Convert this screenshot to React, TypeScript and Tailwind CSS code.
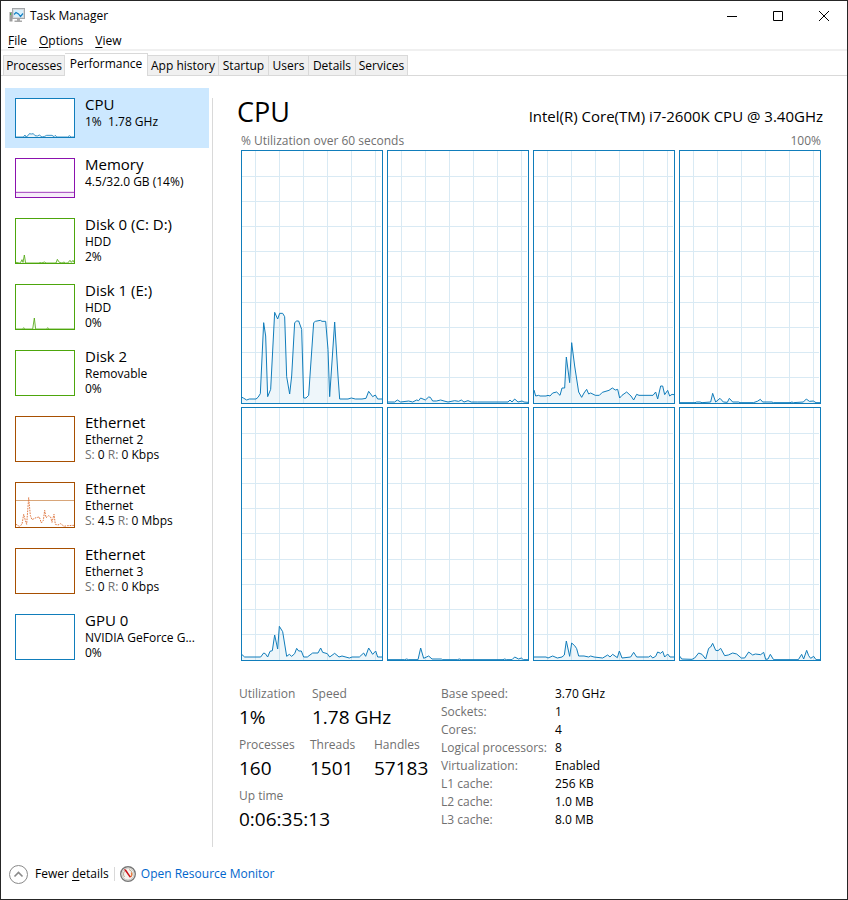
import { useState } from "react";
import clsx from "clsx";

type Point = [number, number];

// every trace is a list of [x, height above the baseline], in thirds of a pixel
const cores: Point[][] = [
    [[0, 16], [4, 14], [14, 8], [22, 11], [42, 11], [48, 16], [55, 27], [65, 240], [71, 200], [77, 18], [86, 40], [98, 271], [107, 251], [113, 268], [122, 268], [128, 258], [134, 78], [143, 26], [149, 80], [158, 240], [164, 245], [170, 245], [179, 220], [185, 14], [192, 14], [200, 22], [206, 110], [215, 240], [220, 244], [235, 247], [240, 244], [251, 244], [258, 160], [263, 18], [278, 242], [288, 80], [293, 11], [318, 11], [328, 14], [340, 11], [360, 11], [372, 13], [380, 34], [392, 18], [400, 23], [407, 11], [420, 11]],
    [[0, 2], [20, 2], [28, 8], [38, 2], [62, 5], [74, 2], [86, 8], [92, 6], [98, 14], [112, 8], [122, 17], [127, 16], [134, 5], [145, 5], [158, 8], [168, 5], [180, 2], [200, 6], [212, 4], [220, 8], [228, 2], [240, 6], [250, 2], [268, 2], [360, 2], [366, 8], [372, 2], [380, 11], [390, 2], [402, 5], [408, 2], [420, 1]],
    [[0, 38], [5, 20], [14, 22], [18, 20], [36, 20], [42, 22], [48, 20], [56, 29], [68, 32], [78, 22], [84, 44], [92, 44], [97, 137], [107, 60], [113, 180], [122, 110], [134, 32], [143, 16], [150, 29], [158, 40], [164, 26], [170, 29], [184, 22], [196, 22], [205, 31], [225, 37], [235, 44], [244, 38], [251, 40], [257, 14], [264, 22], [278, 32], [291, 20], [299, 8], [308, 25], [315, 22], [357, 22], [365, 32], [371, 11], [380, 50], [386, 50], [392, 24], [401, 37], [407, 20], [414, 25], [420, 24]],
    [[0, 0], [45, 0], [50, 2], [60, 2], [66, 0], [92, 2], [98, 28], [107, 2], [120, 13], [130, 2], [142, 1], [148, 13], [158, 2], [176, 2], [180, 0], [220, 0], [232, 4], [241, 10], [248, 2], [276, 2], [280, 0], [330, 0], [336, 2], [340, 0], [370, 2], [379, 11], [388, 4], [400, 5], [408, 0], [420, 0]],
    [[0, 15], [8, 8], [56, 8], [65, 20], [70, 18], [77, 8], [84, 25], [91, 27], [98, 74], [107, 32], [112, 100], [122, 84], [134, 10], [142, 16], [149, 10], [158, 18], [164, 34], [170, 26], [178, 26], [185, 8], [196, 8], [212, 20], [228, 20], [236, 35], [242, 22], [256, 18], [263, 8], [278, 19], [291, 8], [300, 11], [322, 5], [330, 8], [352, 8], [365, 20], [371, 10], [380, 35], [392, 16], [401, 26], [407, 8], [420, 8]],
    [[0, 0], [50, 0], [56, 2], [62, 0], [90, 0], [98, 35], [107, 4], [122, 11], [132, 2], [150, 2], [160, 2], [164, 0], [208, 0], [214, 2], [220, 0], [345, 0], [350, 2], [356, 0], [372, 0], [380, 8], [392, 2], [400, 5], [406, 0], [420, 0]],
    [[0, 8], [36, 8], [42, 5], [56, 11], [70, 5], [84, 8], [91, 14], [97, 56], [107, 10], [113, 50], [122, 42], [128, 33], [134, 11], [150, 11], [164, 8], [170, 11], [180, 8], [206, 5], [221, 14], [228, 8], [236, 16], [250, 6], [256, 26], [264, 5], [290, 8], [299, 22], [308, 8], [344, 8], [350, 12], [356, 5], [365, 10], [371, 23], [380, 19], [386, 25], [392, 8], [401, 17], [408, 8], [420, 8]],
    [[0, 10], [5, 2], [36, 1], [44, 5], [56, 20], [66, 16], [77, 2], [86, 34], [92, 38], [98, 49], [107, 28], [114, 27], [122, 34], [134, 12], [145, 14], [158, 20], [170, 17], [184, 5], [194, 5], [206, 23], [218, 14], [226, 17], [242, 15], [251, 22], [257, 1], [264, 2], [271, 16], [280, 1], [282, 0], [355, 0], [365, 16], [371, 2], [380, 28], [386, 12], [392, 4], [401, 10], [408, 0], [420, 0]],
];

const cpuMini: Point[] = [[0, 0], [22, 0], [27, 6], [30, 0], [36, 4], [40, 10], [46, 9], [52, 10], [57, 4], [64, 3], [70, 6], [78, 0], [86, 2], [92, 5], [108, 5], [114, 1], [118, 5], [122, 0], [155, 0], [160, 4], [166, 0], [174, 0]];
const memoryMini: Point[] = [[-4, 14], [178, 14]];
const disk0Mini: Point[] = [[0, 2], [10, 0], [14, 2], [18, 10], [21, 2], [25, 24], [29, 0], [70, 0], [73, 3], [76, 0], [86, 3], [90, 0], [120, 0], [124, 11], [130, 2], [138, 0], [144, 3], [148, 0], [155, 0], [162, 8], [166, 2], [171, 8], [174, 2]];
const disk1Mini: Point[] = [[0, 0], [20, 0], [23, 4], [26, 0], [50, 0], [55, 33], [59, 0], [92, 0], [95, 4], [98, 0], [174, 0]];
const netMini: Point[] = [[0, 8], [10, 2], [18, 8], [23, 38], [28, 20], [32, 8], [38, 88], [43, 35], [48, 22], [60, 28], [70, 30], [76, 12], [82, 20], [86, 50], [90, 28], [98, 34], [104, 30], [108, 14], [114, 38], [118, 8], [126, 6], [134, 10], [144, 2], [154, 4], [174, 5]];

const devices = [
    { name: "CPU", lines: ["1%  1.78 GHz"], box: "h-10 border-[#117dbb] text-[#117dbb]", trace: cpuMini },
    { name: "Memory", lines: ["4.5/32.0 GB (14%)"], box: "h-10 border-[#8b12ae] text-[#8b12ae]", trace: memoryMini },
    { name: "Disk 0 (C: D:)", lines: ["HDD", "2%"], box: "h-[46px] border-[#4da60c] text-[#4da60c]", trace: disk0Mini },
    { name: "Disk 1 (E:)", lines: ["HDD", "0%"], box: "h-[46px] border-[#4da60c] text-[#4da60c]", trace: disk1Mini },
    { name: "Disk 2", lines: ["Removable", "0%"], box: "h-[46px] border-[#4da60c] text-[#4da60c]" },
    { name: "Ethernet", lines: ["Ethernet 2"], net: ["0", "0 Kbps"], box: "h-[46px] border-[#a74f01] text-[#a74f01]" },
    { name: "Ethernet", lines: ["Ethernet"], net: ["4.5", "0 Mbps"], box: "h-[46px] border-[#a74f01] text-[#a74f01]", trace: netMini, dotted: true },
    { name: "Ethernet", lines: ["Ethernet 3"], net: ["0", "0 Kbps"], box: "h-[46px] border-[#a74f01] text-[#a74f01]" },
    { name: "GPU 0", lines: ["NVIDIA GeForce G...", "0%"], box: "h-[46px] border-[#117dbb] text-[#117dbb]" },
];

const tabs = [
    { name: "Processes", width: "w-[62px]" },
    { name: "Performance", width: "w-[83px]" },
    { name: "App history", width: "w-[71px]" },
    { name: "Startup", width: "w-[50px]" },
    { name: "Users", width: "w-10" },
    { name: "Details", width: "w-[47px]" },
    { name: "Services", width: "w-[52px]" },
];

const specs = [
    ["Base speed:", "3.70 GHz"],
    ["Sockets:", "1"],
    ["Cores:", "4"],
    ["Logical processors:", "8"],
    ["Virtualization:", "Enabled"],
    ["L1 cache:", "256 KB"],
    ["L2 cache:", "1.0 MB"],
    ["L3 cache:", "8.0 MB"],
];

const toPoints = (trace: Point[], base: number) => trace.map(([x, h]) => `${x},${base - h}`).join(" ");

const CoreChart = ({ trace }: { trace: Point[] }) => {
    const line = toPoints(trace, 755);
    return (
        <div className="h-[254px] border border-[#117dbb] bg-white">
            <svg className="block h-full w-full" viewBox="0 0 420 756" preserveAspectRatio="none" fill="none">
                <g stroke="#d9eaf4" strokeWidth="3">
                    {[0, 1, 2, 3, 4, 5].map((i) => (
                        <path key={i} d={`M${40.5 + i * 72} 0V756`} />
                    ))}
                    {[25, 50, 75, 100, 125, 151, 176, 201, 226].map((y) => (
                        <path key={y} d={`M0 ${y * 3 + 1.5}H417`} />
                    ))}
                </g>
                <polygon points={`0,756 ${line} 420,756`} fill="#117dbb" fillOpacity="0.07" />
                <polyline points={line} stroke="#117dbb" strokeWidth="3" />
            </svg>
        </div>
    );
};

const MiniChart = ({ trace, dotted, tall }: { trace: Point[]; dotted?: boolean; tall: boolean }) => {
    const base = tall ? 132 : 114;
    const line = toPoints(trace, base);
    return (
        <svg className="block h-full w-full" viewBox={`0 0 174 ${base}`} preserveAspectRatio="none" fill="none">
            {dotted ? (
                <>
                    <path d="M0 52.500H174" stroke="#d8a67a" strokeWidth="3" />
                    <polyline points={line} stroke="#e07a45" strokeWidth="3" strokeDasharray="5 3" />
                </>
            ) : (
                <>
                    <polygon points={`0,${base} ${line} 174,${base}`} fill="currentColor" fillOpacity="0.08" />
                    <polyline points={line} stroke="currentColor" strokeWidth="3" strokeOpacity="0.8" />
                </>
            )}
        </svg>
    );
};

const AppIcon = () => (
    <svg className="h-4 w-4" viewBox="0 0 16 16">
        <rect x="0.500" y="4" width="3" height="9.500" fill="#9c9c9c" />
        <rect x="1" y="5" width="1" height="2" fill="#3fae49" />
        <rect x="3.500" y="0.500" width="12" height="10" fill="#d5d9dc" stroke="#a3a7aa" />
        <rect x="5" y="2" width="9" height="7" fill="#d8f0fc" />
        <path d="M5 6.500l2-2 2.500 1.500 2 2.500 2.500-3" fill="none" stroke="#1481c4" strokeWidth="1.200" />
        <path d="M8 11h3v1.500h2V14H5.500v-1.500H8z" fill="#a9a9a9" />
    </svg>
);

const GaugeIcon = () => (
    <svg className="h-4 w-4" viewBox="0 0 16 16">
        <circle cx="8" cy="8" r="7.300" fill="#f5f3ef" stroke="#777" strokeWidth="1.400" />
        <circle cx="8" cy="8" r="6" fill="none" stroke="#c9c7c3" />
        <path d="M4.500 11A4.600 4.600 0 0 1 6 4M9 3.500a4.600 4.600 0 0 1 2 7.500" fill="none" stroke="#b9a88e" />
        <path d="M11.300 6.500a4 4 0 0 1-.8 4.500" fill="none" stroke="#ee7a3c" strokeWidth="1.200" />
        <path d="M3.800 3.200L6 3.500l5 7.500-1.300.6z" fill="#c90f16" />
    </svg>
);

const Stat = ({ label, value, width }: { label: string; value: string; width: string }) => (
    <div className={width}>
        <dt className="whitespace-nowrap text-xs leading-[18px] text-[#707070]">{label}</dt>
        <dd className="whitespace-nowrap text-[19px] leading-7">{value}</dd>
    </div>
);

const App = () => {
    const [tab, setTab] = useState("Performance");
    const [device, setDevice] = useState(0);

    return (
        <div className="flex min-h-screen flex-col border border-[#262626] bg-white font-['Open_Sans','Noto_Sans',sans-serif] text-xs text-black">
            <header className="flex h-[30px] items-center pl-2">
                <AppIcon />
                <h1 className="ml-[5px] flex-1">Task Manager</h1>
                <button aria-label="Minimize" className="flex h-7 w-[46px] items-center justify-center">
                    <svg className="h-[10px] w-[10px]" viewBox="0 0 10 10" stroke="#000"><path d="M0 5.500h10" /></svg>
                </button>
                <button aria-label="Maximize" className="flex h-7 w-[46px] items-center justify-center">
                    <svg className="h-[10px] w-[10px]" viewBox="0 0 10 10" stroke="#000" fill="none"><path d="M.5.5h9v9h-9z" /></svg>
                </button>
                <button aria-label="Close" className="flex h-7 w-[46px] items-center justify-center">
                    <svg className="h-[10px] w-[10px]" viewBox="0 0 10 10" stroke="#000"><path d="M0 0l10 10M10 0L0 10" /></svg>
                </button>
            </header>

            <nav className="flex h-5 items-end gap-3 border-b-2 border-[#f0f0f0] pl-[7px]">
                {["File", "Options", "View"].map((item) => (
                    <button key={item} className="leading-4">
                        <span className="underline underline-offset-2">{item[0]}</span>{item.slice(1)}
                    </button>
                ))}
            </nav>

            <div role="tablist" className="mt-[2px] flex h-[23px] items-end border-b border-[#d9d9d9] pl-[2px]">
                {tabs.map((t) => (
                    <button
                        key={t.name}
                        role="tab"
                        aria-selected={tab === t.name}
                        onClick={() => setTab(t.name)}
                        className={clsx(
                            "whitespace-nowrap border-r border-t border-[#d9d9d9] text-center leading-4 first:border-l",
                            t.width,
                            tab === t.name ? "-mb-px h-[23px] bg-white pb-[2px]" : "h-5 bg-[#f0f0f0]"
                        )}
                    >
                        {t.name}
                    </button>
                ))}
            </div>

            <div className="mb-[2px] flex flex-1">
                <aside className="w-[208px] shrink-0 pl-1 pt-3">
                    {devices.map((d, i) => (
                        <button
                            key={i}
                            onClick={() => setDevice(i)}
                            className={clsx(
                                "flex w-full items-start gap-[10px] px-[10px] text-left",
                                d.box.includes("h-10") ? "h-[60px]" : "h-[66px]",
                                device === i && "bg-[#cce8ff]"
                            )}
                        >
                            <span className={clsx("mt-[10px] block w-[60px] shrink-0 border bg-white", d.box)}>
                                {d.trace && <MiniChart trace={d.trace} dotted={d.dotted} tall={i > 1} />}
                            </span>
                            <span className="block min-w-0 whitespace-pre pt-[6px] leading-[15px]">
                                <span className="block text-[15px] leading-5">{d.name}</span>
                                {d.lines.map((line) => (
                                    <span key={line} className="block">{line}</span>
                                ))}
                                {d.net && (
                                    <span className="block">
                                        <span className="text-[#707070]">S:</span> {d.net[0]} <span className="text-[#707070]">R:</span> {d.net[1]}
                                    </span>
                                )}
                            </span>
                        </button>
                    ))}
                </aside>

                <main className="ml-[3px] mt-[22px] flex-1 border-l border-[#d9d9d9] px-6">
                    <div className="-mt-[6px] flex h-10 items-baseline justify-between">
                        <h2 className="text-[27px] leading-10">CPU</h2>
                        <p className="text-[15px]">Intel(R) Core(TM) i7-2600K CPU @ 3.40GHz</p>
                    </div>
                    <div className="flex justify-between pl-1 pr-[2px] leading-[18px] text-[#707070]">
                        <span>% Utilization over 60 seconds</span>
                        <span>100%</span>
                    </div>
                    <div className="grid grid-cols-4 gap-x-1 gap-y-[3px] pl-1 pr-[2px]">
                        {cores.map((trace, i) => (
                            <CoreChart key={i} trace={trace} />
                        ))}
                    </div>

                    <div className="mt-6 flex pl-[2px]">
                        <dl className="flex w-[202px] flex-col gap-[5px]">
                            <div className="flex">
                                <Stat label="Utilization" value="1%" width="w-[73px]" />
                                <Stat label="Speed" value="1.78 GHz" width="w-[100px]" />
                            </div>
                            <div className="flex">
                                <Stat label="Processes" value="160" width="w-[71px]" />
                                <Stat label="Threads" value="1501" width="w-16" />
                                <Stat label="Handles" value="57183" width="w-16" />
                            </div>
                            <Stat label="Up time" value="0:06:35:13" width="w-full" />
                        </dl>
                        <dl className="leading-[18px]">
                            {specs.map(([label, value]) => (
                                <div key={label} className="flex">
                                    <dt className="w-[114px] whitespace-nowrap text-[#707070]">{label}</dt>
                                    <dd>{value}</dd>
                                </div>
                            ))}
                        </dl>
                    </div>
                </main>
            </div>

            <footer className="flex h-[50px] items-center pl-2">
                <button className="flex items-center gap-[7px]">
                    <svg className="h-[19px] w-[19px]" viewBox="0 0 19 19" fill="none" stroke="#8a8a8a">
                        <circle cx="9.500" cy="9.500" r="9" />
                        <path d="M5.500 11.500l4-4 4 4" strokeWidth="1.600" />
                    </svg>
                    <span>Fewer <span className="underline underline-offset-2">d</span>etails</span>
                </button>
                <span className="mx-[5px] h-[14px] w-px bg-[#d9d9d9]" />
                <a href="#resource-monitor" className="flex items-center gap-[5px] text-[#0066cc]">
                    <GaugeIcon />
                    Open Resource Monitor
                </a>
            </footer>
        </div>
    );
};

export default App;
